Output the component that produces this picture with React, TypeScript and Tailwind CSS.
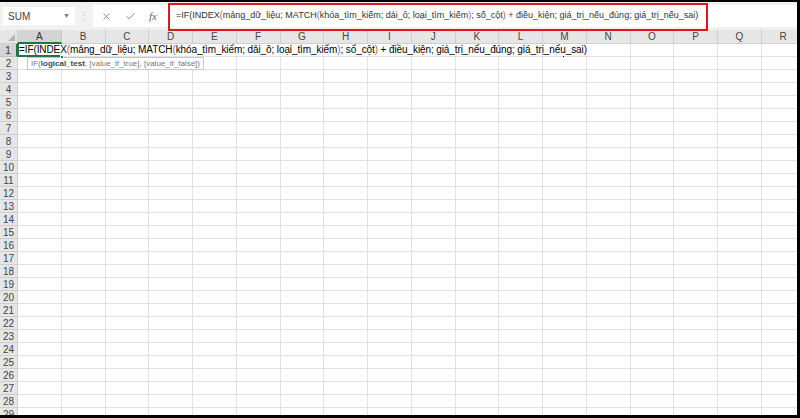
import { X, Check } from "lucide-react"

const cols = "ABCDEFGHIJKLMNOPQR".split("")
const rows = Array.from({ length: 29 }, (_, i) => i + 1)

const RED = "text-[#d2454a]"
const PURPLE = "text-[#a34fc4]"

function Formula() {
  return (
    <>
      =IF(INDEX<span className={RED}>(</span>mảng_dữ_liệu; MATCH
      <span className={PURPLE}>(</span>khóa_tìm_kiếm; dải_ô; loại_tìm_kiếm
      <span className={PURPLE}>)</span>; số_cột<span className={RED}>)</span> + điều_kiện;
      giá_trị_nếu_đúng; giá_trị_nếu_sai)
    </>
  )
}

export default function App() {
  return (
    <div className="w-[800px] h-[418px] bg-black pt-[2px] pr-[3px] pb-[3px] overflow-hidden">
      <div className="relative h-full bg-white overflow-hidden font-['Liberation_Sans',sans-serif]">
        {/* formula bar */}
        <div className="h-[28px] bg-[#f1f1f1] flex items-center">
          <div className="ml-[3px] w-[72px] h-[18px] bg-white flex items-center justify-between pl-[5px] pr-[5px]">
            <span className="text-[10px] text-[#444]">SUM</span>
            <span className="text-[7px] text-[#777]">▼</span>
          </div>
          <div className="w-[18px] flex justify-center text-[10px] text-[#bbb] leading-none">⋮</div>
          <div className="flex-1 h-[22px] bg-white flex items-center">
            <div className="w-[72px] flex items-center pl-[8px] gap-[13px] text-[#555]">
              <X size={11} strokeWidth={1.4} />
              <Check size={11} strokeWidth={1.6} />
              <span className="text-[11px] italic font-['Liberation_Serif',serif] text-[#666]">fx</span>
            </div>
            <div className="pl-[11px] text-[9px] text-[#333] whitespace-nowrap">
              <Formula />
            </div>
          </div>
        </div>

        {/* column headers */}
        <div className="flex h-[14px]">
          <div className="w-[18px] shrink-0 bg-[#e6e6e6] border-r border-b border-[#cfcfcf] relative">
            <div className="absolute right-[2px] bottom-[2px] w-0 h-0 border-l-[7px] border-l-transparent border-b-[7px] border-b-[#b5b5b5]" />
          </div>
          {cols.map((c) => (
            <div
              key={c}
              className={
                c === "A"
                  ? "w-[43.75px] shrink-0 bg-[#d4d4d4] border-r border-[#c4c4c4] border-b-2 border-b-[#217346] text-[10px] text-[#333] flex items-center justify-center"
                  : "w-[43.75px] shrink-0 bg-[#e6e6e6] border-r border-b border-[#cfcfcf] text-[10px] text-[#444] flex items-center justify-center"
              }
            >
              {c}
            </div>
          ))}
        </div>

        {/* rows */}
        {rows.map((r) => (
          <div key={r} className="flex h-[13px]">
            <div
              className={
                r === 1
                  ? "w-[18px] shrink-0 bg-[#d4d4d4] border-r-2 border-r-[#217346] border-b border-[#c4c4c4] text-[10px] text-[#333] flex items-center justify-center"
                  : "w-[18px] shrink-0 bg-[#e6e6e6] border-r border-b border-[#cfcfcf] text-[10px] text-[#444] flex items-center justify-center"
              }
            >
              {r}
            </div>
            {cols.map((c) => (
              <div key={c} className="relative w-[43.75px] shrink-0 border-r border-b border-[#e1e1e1]">
                {r === 1 && c === "A" && (
                  <>
                    <div className="absolute left-[1px] top-0 h-[12px] pr-[2px] bg-white z-10 whitespace-nowrap text-[10px] tracking-[-0.1px] leading-[12px] text-black">
                      <Formula />
                    </div>
                    <div className="absolute -left-px -top-px w-[46px] h-[14px] border-l-2 border-b-2 border-[#217346] z-20" />
                    <div className="absolute -right-[3px] -bottom-[3px] w-[4px] h-[4px] bg-[#217346] border border-white z-20" />
                  </>
                )}
                {r === 2 && c === "A" && (
                  <div className="absolute left-[9px] top-0 h-[13px] px-[3px] bg-white border border-[#c6c6c6] z-10 whitespace-nowrap text-[8px] leading-[11px] text-[#777]">
                    IF(<span className="font-bold text-[#444]">logical_test</span>, [value_if_true], [value_if_false])
                  </div>
                )}
              </div>
            ))}
          </div>
        ))}

        {/* annotation */}
        <div className="absolute left-[168px] top-[1px] w-[540px] h-[28px] border-2 border-[#e0161e]" />
        {/* text cursor */}
        <div className="absolute left-[563px] top-[44px] w-px h-[11px] bg-black" />
      </div>
    </div>
  )
}
